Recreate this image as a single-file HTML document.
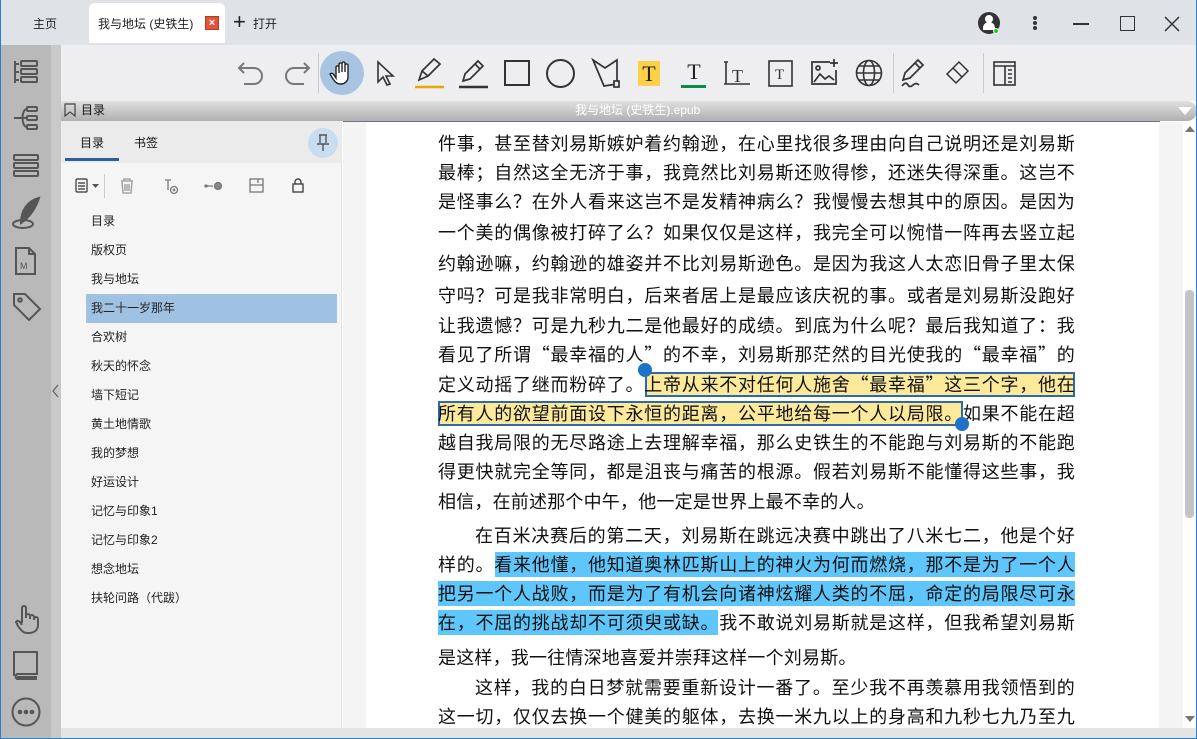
<!DOCTYPE html>
<html><head><meta charset="utf-8"><style>
*{margin:0;padding:0;box-sizing:border-box}
body{width:1197px;height:739px;overflow:hidden;position:relative;background:#fff;font-family:"Liberation Sans","Noto Sans CJK SC",sans-serif;}
.a{position:absolute}
.ln{position:absolute;left:438px;width:637px;height:29px;line-height:29px;font-size:18px;color:#111;text-align:justify;text-align-last:justify;white-space:nowrap;letter-spacing:0.2px;font-family:"Noto Sans CJK SC",sans-serif}
.toc{position:absolute;left:91px;font-size:12px;color:#222;line-height:16px}
svg{position:absolute;overflow:visible}
</style></head><body>
<div class="a" style="left:0;top:0;width:1197px;height:739px;border:1px solid #2b7fd3;border-top:none;z-index:50;pointer-events:none"></div>
<div class="a" style="left:0;top:0;width:1197px;height:45px;background:#dfe2e7"></div>
<div class="a" style="left:33px;top:15px;font-size:12px;color:#222">主页</div>
<div class="a" style="left:89px;top:3px;width:136px;height:40px;background:#fff;border-radius:6px 6px 0 0"></div>
<div class="a" style="left:98px;top:15px;font-size:12px;color:#222">我与地坛 (史铁生)</div>
<div class="a" style="left:205px;top:16px;width:14px;height:14px;background:#e0553a;border:1px solid #b03a22;color:#fff;font-size:11px;line-height:12px;text-align:center;font-weight:bold">×</div>
<div class="a" style="left:233px;top:10px;font-size:22px;line-height:24px;color:#222">+</div>
<div class="a" style="left:253px;top:15px;font-size:12px;color:#222">打开</div>
<div class="a" style="left:978px;top:12px;width:22px;height:22px;border-radius:50%;background:#333"></div>
<div class="a" style="left:985px;top:15px;width:8px;height:8px;border-radius:50%;background:#fff"></div>
<div class="a" style="left:983px;top:22px;width:12px;height:8px;border-radius:6px 6px 0 0;background:#fff"></div>
<div class="a" style="left:993px;top:28px;width:6px;height:6px;border-radius:50%;background:#1bd11b;border:1px solid #fff"></div>
<div class="a" style="left:1033px;top:16px;width:4px;height:4px;border-radius:50%;background:#333;box-shadow:0 5px 0 #333,0 10px 0 #333"></div>
<div class="a" style="left:1073px;top:23px;width:16px;height:2px;background:#333"></div>
<div class="a" style="left:1120px;top:16px;width:15px;height:15px;border:1.5px solid #333"></div>
<svg style="left:1164px;top:16px" width="16" height="16"><path d="M1 1L15 15M15 1L1 15" stroke="#333" stroke-width="1.5"/></svg>
<div class="a" style="left:0;top:45px;width:51px;height:694px;background:#b9b9b9"></div>
<div class="a" style="left:51px;top:45px;width:10px;height:694px;background:#c9c9c9"></div>
<svg style="left:13px;top:60px" width="26" height="24" fill="none" stroke="#555" stroke-width="2"><path d="M2 1v22M2 4h4M2 12h4M2 20h4"/><rect x="8" y="1" width="16" height="5" rx="1"/><rect x="8" y="9" width="16" height="5" rx="1"/><rect x="8" y="17" width="16" height="5" rx="1"/></svg>
<svg style="left:13px;top:106px" width="26" height="24" fill="none" stroke="#555" stroke-width="2"><path d="M1 12h6M14 3c-6 0-6 18 0 18M7 12h7"/><rect x="14" y="1" width="10" height="4" rx="1"/><rect x="14" y="10" width="10" height="4" rx="1"/><rect x="14" y="19" width="10" height="4" rx="1"/></svg>
<svg style="left:13px;top:154px" width="26" height="24" fill="none" stroke="#555" stroke-width="2"><rect x="1" y="1" width="24" height="5" rx="1"/><rect x="1" y="9" width="24" height="5" rx="1"/><rect x="1" y="17" width="24" height="5" rx="1"/></svg>
<svg style="left:11px;top:197px" width="30" height="32" fill="none" stroke="#555" stroke-width="2"><path d="M28 1C16 4 10 14 10 26 16 22 24 14 28 1z" fill="#555"/><ellipse cx="12" cy="27" rx="10" ry="4"/></svg>
<svg style="left:15px;top:247px" width="22" height="28" fill="none" stroke="#555" stroke-width="2"><path d="M1 1h13l6 6v20H1z"/><path d="M14 1v6h6"/><text x="5" y="22" font-size="9" fill="#555" stroke="none" font-family="Liberation Sans">M</text></svg>
<svg style="left:12px;top:292px" width="30" height="30" fill="none" stroke="#555" stroke-width="2"><path d="M2 2h11l15 15-11 11L2 13z"/><circle cx="8" cy="8" r="1.8"/></svg>
<svg style="left:52px;top:384px" width="8" height="14" fill="none" stroke="#666" stroke-width="1.3"><path d="M6 1L1 7l5 6"/></svg>
<svg style="left:12px;top:603px" width="28" height="32" fill="none" stroke="#555" stroke-width="2"><path d="M10 20V5a2 2 0 014 0v10M14 13a2 2 0 014 0v3M18 14a2 2 0 014 0v3M22 16a2 2 0 014 0v6c0 5-4 8-9 8h-2c-4 0-6-3-9-7l-2-4c1-2 3-1 4 0l2 3"/></svg>
<svg style="left:12px;top:650px" width="28" height="30" fill="none" stroke="#555" stroke-width="2"><path d="M2 26V2h23v22H5a3 3 0 000 5h20"/><path d="M5 27h20"/></svg>
<svg style="left:11px;top:697px" width="30" height="30" fill="none" stroke="#555" stroke-width="2"><circle cx="15" cy="15" r="13.5"/><circle cx="9" cy="15" r="1.3" fill="#555"/><circle cx="15" cy="15" r="1.3" fill="#555"/><circle cx="21" cy="15" r="1.3" fill="#555"/></svg>
<div class="a" style="left:61px;top:45px;width:1136px;height:56px;background:#eeeef0"></div>
<svg style="left:238px;top:60px" width="28" height="26" fill="none" stroke="#777" stroke-width="2"><path d="M6 3L1 8l5 5M1 8h15a8 8 0 010 16H6"/></svg>
<svg style="left:282px;top:60px" width="28" height="26" fill="none" stroke="#777" stroke-width="2"><path d="M22 3l5 5-5 5M27 8H12a8 8 0 000 16h10"/></svg>
<div class="a" style="left:318px;top:53px;width:1px;height:40px;background:#ccc"></div>
<div class="a" style="left:320px;top:51px;width:44px;height:44px;border-radius:50%;background:#a7c5e2"></div>
<svg style="left:330px;top:60px" width="24" height="26" fill="#fff" stroke="#222" stroke-width="1.4"><path d="M6 18V7a1.6 1.6 0 013 0v6V4a1.6 1.6 0 013 0v8V3a1.6 1.6 0 013 0v9V5a1.6 1.6 0 013 0v12c0 4-3 7-7 7h-1c-3 0-5-2-7-5l-3-5c1-1 3-1 4 1z"/></svg>
<svg style="left:376px;top:61px" width="20" height="26" fill="none" stroke="#333" stroke-width="1.6"><path d="M2 1v20l5-5 4 8 3-1-4-8h7z"/></svg>
<svg style="left:414px;top:57px" width="32" height="32" fill="none" stroke="#333" stroke-width="1.7"><path d="M5 23l3-9L20 2l6 5-12 12-9 4z"/><path d="M8 14l6 5"/><path d="M1 30h29" stroke="#e8a800" stroke-width="2.5"/></svg>
<svg style="left:458px;top:57px" width="32" height="32" fill="none" stroke="#333" stroke-width="1.7"><path d="M5 24l2-7L20 4l5 5-13 13z"/><path d="M17 7l5 5"/><path d="M1 30h29" stroke="#333" stroke-width="2.5"/></svg>
<div class="a" style="left:504px;top:60px;width:26px;height:26px;border:2px solid #333"></div>
<div class="a" style="left:546px;top:59px;width:29px;height:29px;border:2px solid #333;border-radius:50%"></div>
<svg style="left:591px;top:58px" width="30" height="30" fill="none" stroke="#333" stroke-width="1.7"><path d="M2 2l12 8 12-8v24l-13 2z"/><rect x="23" y="23" width="5" height="6" fill="#eee"/></svg>
<div class="a" style="left:638px;top:61px;width:22px;height:25px;background:#fdd04a;font-family:'Liberation Serif',serif;font-size:22px;line-height:25px;text-align:center;color:#222">T</div>
<div class="a" style="left:683px;top:60px;width:22px;font-family:'Liberation Serif',serif;font-size:22px;line-height:24px;text-align:center;color:#222">T</div>
<div class="a" style="left:681px;top:85px;width:25px;height:3px;background:#0b8a4a"></div>
<svg style="left:724px;top:60px" width="26" height="28" fill="none" stroke="#333" stroke-width="1.6"><path d="M2 2v22M0 2h4M0 24h26"/><text x="8" y="22" font-size="18" fill="#333" stroke="none" font-family="Liberation Serif">T</text></svg>
<svg style="left:768px;top:60px" width="26" height="28" fill="none" stroke="#333" stroke-width="1.6"><rect x="1" y="1" width="23" height="25"/><text x="7" y="19" font-size="15" fill="#333" stroke="none" font-family="Liberation Serif">T</text></svg>
<svg style="left:810px;top:58px" width="30" height="30" fill="none" stroke="#333" stroke-width="1.7"><path d="M20 4H2v22h24V12"/><path d="M4 24l6-8 5 5 4-3 5 4"/><circle cx="8" cy="10" r="2"/><path d="M24 1v8M20 5h8"/></svg>
<svg style="left:855px;top:59px" width="28" height="28" fill="none" stroke="#333" stroke-width="1.6"><circle cx="14" cy="14" r="12.5"/><ellipse cx="14" cy="14" rx="5.5" ry="12.5"/><path d="M1.5 14h25M4 7h20M4 21h20"/></svg>
<div class="a" style="left:893px;top:53px;width:1px;height:40px;background:#ccc"></div>
<svg style="left:899px;top:56px" width="32" height="34" fill="none" stroke="#333" stroke-width="1.7"><path d="M4 24l2-7L19 4l5 5-13 13z"/><path d="M16 7l5 5"/><path d="M3 30c3-4 5-3 6-1s3 2 5 0 4-2 6 0"/></svg>
<svg style="left:944px;top:60px" width="28" height="24" fill="none" stroke="#333" stroke-width="1.5"><path d="M3 14L15 2l9 9-12 12z M9 8l9 9"/></svg>
<div class="a" style="left:983px;top:53px;width:1px;height:40px;background:#ccc"></div>
<svg style="left:993px;top:61px" width="24" height="25" fill="none" stroke="#333" stroke-width="1.6"><rect x="1" y="1" width="21" height="23"/><path d="M1 5h21M12 5v19M15 9h4M15 13h4M15 17h4M15 21h4"/></svg>
<div class="a" style="left:61px;top:101px;width:1136px;height:20px;background:linear-gradient(#e0e0e0,#b0b0b0);border-radius:0 10px 10px 0"></div>
<div class="a" style="left:343px;top:121px;width:817px;height:1px;background:#6f7388"></div>
<svg style="left:64px;top:103px" width="12" height="14" fill="none" stroke="#444" stroke-width="1.2"><path d="M1 1h10v12L6 9l-5 4z"/></svg>
<div class="a" style="left:81px;top:103px;font-size:12px;color:#111;line-height:15px">目录</div>
<div class="a" style="left:575px;top:103px;font-size:12px;color:#fff;line-height:15px">我与地坛 (史铁生).epub</div>
<svg style="left:1178px;top:107px" width="14" height="8"><path d="M0 0h14L7 8z" fill="#fff"/></svg>
<div class="a" style="left:61px;top:121px;width:281px;height:607px;background:#f5f5f5;border-right:1px solid #e2e2e2"></div>
<div class="a" style="left:61px;top:121px;width:281px;height:42px;background:#ebebeb"></div>
<div class="a" style="left:80px;top:134px;font-size:12px;color:#111">目录</div>
<div class="a" style="left:134px;top:134px;font-size:12px;color:#111">书签</div>
<div class="a" style="left:65px;top:158px;width:54px;height:3px;background:#2f5d9c"></div>
<div class="a" style="left:308px;top:128px;width:30px;height:30px;border-radius:50%;background:#c9ddf0"></div>
<svg style="left:316px;top:134px" width="14" height="18" fill="none" stroke="#555" stroke-width="1.4"><path d="M3 1h8M4 1v8M10 1v8M1 10h12M7 10v7"/></svg>
<svg style="left:75px;top:178px" width="28" height="16" fill="none" stroke="#333" stroke-width="1.2"><rect x="1" y="1" width="11" height="13" rx="1"/><path d="M3 5h7M3 8h7M3 11h7"/><path d="M17 6h7l-3.5 4z" fill="#555" stroke="none"/></svg>
<div class="a" style="left:104px;top:174px;width:1px;height:24px;background:#ccc"></div>
<svg style="left:120px;top:178px" width="14" height="16" fill="none" stroke="#999" stroke-width="1.3"><path d="M1 3h12M4 3V1h6v2M2 3l1 12h8l1-12M5 6v7M7 6v7M9 6v7"/></svg>
<svg style="left:164px;top:179px" width="16" height="16" fill="none" stroke="#777" stroke-width="1.3"><path d="M1 1h6M4 1v10"/><circle cx="10" cy="11" r="3.5"/><path d="M8.5 11h3M10 9.5v3"/></svg>
<svg style="left:205px;top:181px" width="18" height="10" fill="none" stroke="#777" stroke-width="1.3"><path d="M0 5h8"/><circle cx="1" cy="5" r="1" fill="#777"/><circle cx="13" cy="5" r="3.5" fill="#888"/></svg>
<svg style="left:249px;top:178px" width="15" height="15" fill="none" stroke="#777" stroke-width="1.3"><rect x="1" y="1" width="13" height="13"/><path d="M1 7h13M9 1v4"/></svg>
<svg style="left:292px;top:178px" width="12" height="15" fill="none" stroke="#444" stroke-width="1.4"><rect x="1" y="6" width="10" height="8"/><path d="M3 6V4a3 3 0 016 0v2"/></svg>
<div class="a" style="left:86px;top:294px;width:251px;height:29px;background:#a0c2e2"></div>
<div class="toc" style="top:213px">目录</div>
<div class="toc" style="top:242px">版权页</div>
<div class="toc" style="top:271px">我与地坛</div>
<div class="toc" style="top:300px">我二十一岁那年</div>
<div class="toc" style="top:329px">合欢树</div>
<div class="toc" style="top:358px">秋天的怀念</div>
<div class="toc" style="top:387px">墙下短记</div>
<div class="toc" style="top:416px">黄土地情歌</div>
<div class="toc" style="top:445px">我的梦想</div>
<div class="toc" style="top:474px">好运设计</div>
<div class="toc" style="top:503px">记忆与印象1</div>
<div class="toc" style="top:532px">记忆与印象2</div>
<div class="toc" style="top:561px">想念地坛</div>
<div class="toc" style="top:590px">扶轮问路（代跋）</div>
<div class="a" style="left:343px;top:122px;width:23px;height:606px;background:#f4f4f4"></div>
<div class="a" style="left:1159px;top:122px;width:24px;height:606px;background:#f4f4f4"></div>
<div class="a" style="left:1185px;top:290px;width:9px;height:228px;background:#c3c4c8;border-radius:4px"></div>
<svg style="left:1185px;top:126px" width="10" height="6"><path d="M0 6h10L5 0z" fill="#777"/></svg>
<svg style="left:1185px;top:716px" width="10" height="6"><path d="M0 0h10L5 6z" fill="#777"/></svg>
<div class="a" style="left:61px;top:728px;width:1136px;height:11px;background:#e4e4e4"></div>
<div class="a" style="left:645px;top:372px;width:430px;height:25px;background:#fde99a;border:2px solid #2f6aa8"></div>
<div class="a" style="left:438px;top:401px;width:525px;height:25px;background:#fde99a;border:2px solid #2f6aa8"></div>
<div class="a" style="left:638px;top:363px;width:14px;height:14px;border-radius:50%;background:#1e73c8"></div>
<div class="a" style="left:955px;top:417px;width:14px;height:14px;border-radius:50%;background:#1e73c8;z-index:3"></div>
<div class="a" style="left:495px;top:552px;width:580px;height:25px;background:#5ec6fa"></div>
<div class="a" style="left:438px;top:581px;width:637px;height:25px;background:#5ec6fa"></div>
<div class="a" style="left:438px;top:610px;width:280px;height:25px;background:#5ec6fa"></div>
<div class="ln" style="top:129px">件事，甚至替刘易斯嫉妒着约翰逊，在心里找很多理由向自己说明还是刘易斯</div>
<div class="ln" style="top:158px">最棒；自然这全无济于事，我竟然比刘易斯还败得惨，还迷失得深重。这岂不</div>
<div class="ln" style="top:187px">是怪事么？在外人看来这岂不是发精神病么？我慢慢去想其中的原因。是因为</div>
<div class="ln" style="top:218px">一个美的偶像被打碎了么？如果仅仅是这样，我完全可以惋惜一阵再去竖立起</div>
<div class="ln" style="top:249px">约翰逊嘛，约翰逊的雄姿并不比刘易斯逊色。是因为我这人太恋旧骨子里太保</div>
<div class="ln" style="top:281px">守吗？可是我非常明白，后来者居上是最应该庆祝的事。或者是刘易斯没跑好</div>
<div class="ln" style="top:311px">让我遗憾？可是九秒九二是他最好的成绩。到底为什么呢？最后我知道了：我</div>
<div class="ln" style="top:340px">看见了所谓“最幸福的人”的不幸，刘易斯那茫然的目光使我的“最幸福”的</div>
<div class="ln" style="top:370px">定义动摇了继而粉碎了。上帝从来不对任何人施舍“最幸福”这三个字，他在</div>
<div class="ln" style="top:399px">所有人的欲望前面设下永恒的距离，公平地给每一个人以局限。如果不能在超</div>
<div class="ln" style="top:428px">越自我局限的无尽路途上去理解幸福，那么史铁生的不能跑与刘易斯的不能跑</div>
<div class="ln" style="top:457px">得更快就完全等同，都是沮丧与痛苦的根源。假若刘易斯不能懂得这些事，我</div>
<div class="ln" style="top:487px;text-align-last:left">相信，在前述那个中午，他一定是世界上最不幸的人。</div>
<div class="ln" style="top:521px;padding-left:37px">在百米决赛后的第二天，刘易斯在跳远决赛中跳出了八米七二，他是个好</div>
<div class="ln" style="top:550px">样的。看来他懂，他知道奥林匹斯山上的神火为何而燃烧，那不是为了一个人</div>
<div class="ln" style="top:579px">把另一个人战败，而是为了有机会向诸神炫耀人类的不屈，命定的局限尽可永</div>
<div class="ln" style="top:608px">在，不屈的挑战却不可须臾或缺。我不敢说刘易斯就是这样，但我希望刘易斯</div>
<div class="ln" style="top:643px;text-align-last:left">是这样，我一往情深地喜爱并崇拜这样一个刘易斯。</div>
<div class="ln" style="top:673px;padding-left:37px">这样，我的白日梦就需要重新设计一番了。至少我不再羡慕用我领悟到的</div>
<div class="ln" style="top:702px">这一切，仅仅去换一个健美的躯体，去换一米九以上的身高和九秒七九乃至九</div>
</body></html>
